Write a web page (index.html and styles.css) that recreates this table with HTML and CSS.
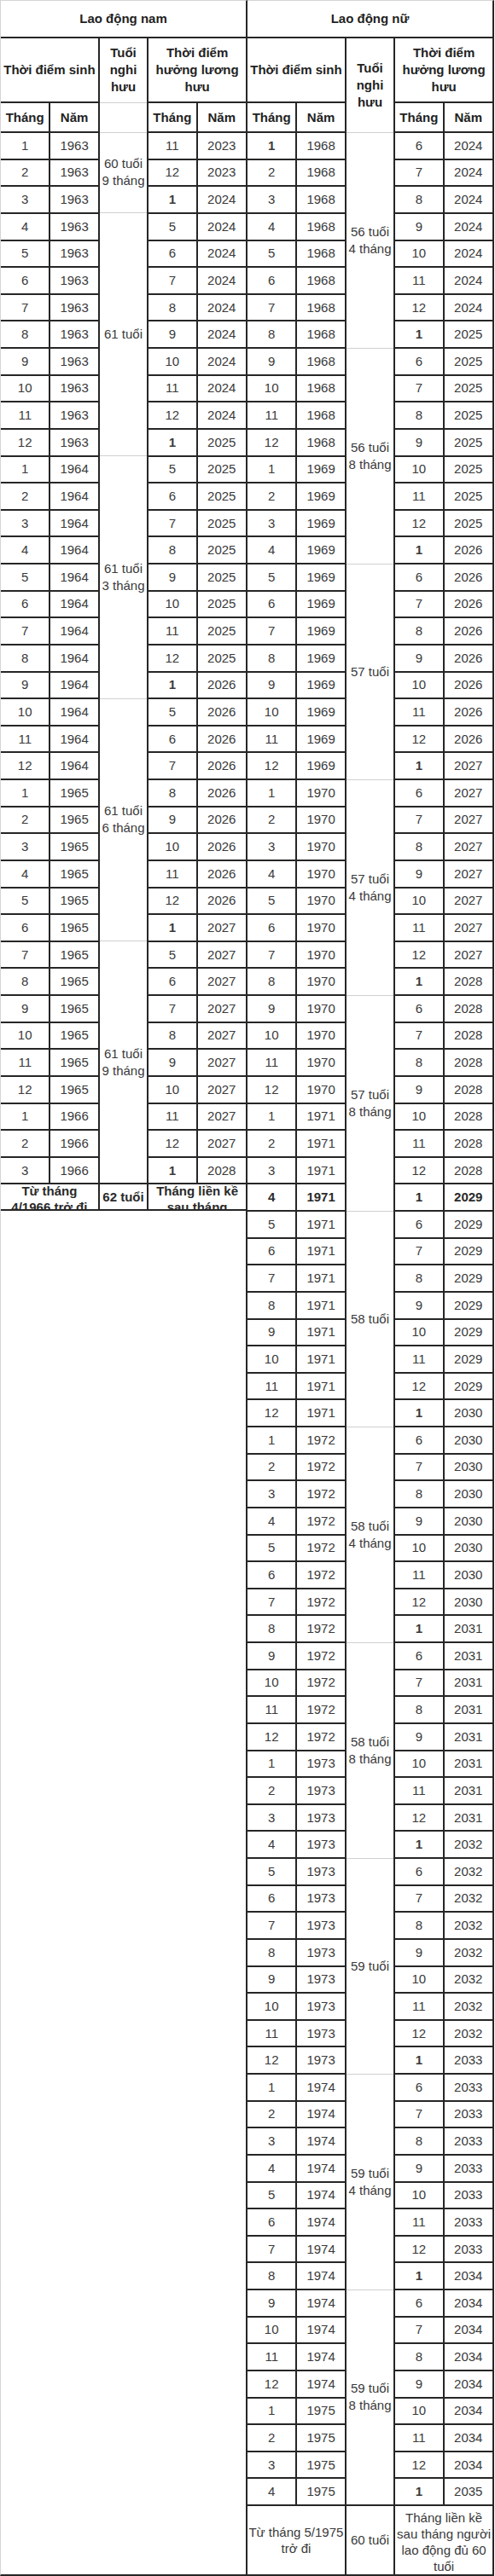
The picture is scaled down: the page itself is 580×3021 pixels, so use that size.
FILE: index.html
```html
<!DOCTYPE html>
<html lang="vi">
<head>
<meta charset="utf-8">
<title>Lộ trình tuổi nghỉ hưu</title>
<link rel="stylesheet" href="styles.css">
</head>
<body>
<div class="sheet">
  <div class="side side-male">
    <table class="grid">
      <colgroup><col><col><col><col><col></colgroup>
      <thead>
        <tr class="h1"><th colspan="5">Lao động nam</th></tr>
        <tr class="h2"><th colspan="2">Thời điểm sinh</th><th class="age">Tuổi<br>nghi<br>hưu</th><th colspan="2">Thời điểm<br>hưởng lương<br>hưu</th></tr>
        <tr class="h3"><th>Tháng</th><th>Năm</th><th class="age"></th><th>Tháng</th><th>Năm</th></tr>
      </thead>
      <tbody>
        <tr><td>1</td><td>1963</td><td class="age" rowspan="3">60 tuổi<br>9 tháng</td><td>11</td><td>2023</td></tr>
        <tr><td>2</td><td>1963</td><td>12</td><td>2023</td></tr>
        <tr><td>3</td><td>1963</td><td class="b">1</td><td>2024</td></tr>
        <tr><td>4</td><td>1963</td><td class="age" rowspan="9">61 tuổi</td><td>5</td><td>2024</td></tr>
        <tr><td>5</td><td>1963</td><td>6</td><td>2024</td></tr>
        <tr><td>6</td><td>1963</td><td>7</td><td>2024</td></tr>
        <tr><td>7</td><td>1963</td><td>8</td><td>2024</td></tr>
        <tr><td>8</td><td>1963</td><td>9</td><td>2024</td></tr>
        <tr><td>9</td><td>1963</td><td>10</td><td>2024</td></tr>
        <tr><td>10</td><td>1963</td><td>11</td><td>2024</td></tr>
        <tr><td>11</td><td>1963</td><td>12</td><td>2024</td></tr>
        <tr><td>12</td><td>1963</td><td class="b">1</td><td>2025</td></tr>
        <tr><td>1</td><td>1964</td><td class="age" rowspan="9">61 tuổi<br>3 tháng</td><td>5</td><td>2025</td></tr>
        <tr><td>2</td><td>1964</td><td>6</td><td>2025</td></tr>
        <tr><td>3</td><td>1964</td><td>7</td><td>2025</td></tr>
        <tr><td>4</td><td>1964</td><td>8</td><td>2025</td></tr>
        <tr><td>5</td><td>1964</td><td>9</td><td>2025</td></tr>
        <tr><td>6</td><td>1964</td><td>10</td><td>2025</td></tr>
        <tr><td>7</td><td>1964</td><td>11</td><td>2025</td></tr>
        <tr><td>8</td><td>1964</td><td>12</td><td>2025</td></tr>
        <tr><td>9</td><td>1964</td><td class="b">1</td><td>2026</td></tr>
        <tr><td>10</td><td>1964</td><td class="age" rowspan="9">61 tuổi<br>6 tháng</td><td>5</td><td>2026</td></tr>
        <tr><td>11</td><td>1964</td><td>6</td><td>2026</td></tr>
        <tr><td>12</td><td>1964</td><td>7</td><td>2026</td></tr>
        <tr><td>1</td><td>1965</td><td>8</td><td>2026</td></tr>
        <tr><td>2</td><td>1965</td><td>9</td><td>2026</td></tr>
        <tr><td>3</td><td>1965</td><td>10</td><td>2026</td></tr>
        <tr><td>4</td><td>1965</td><td>11</td><td>2026</td></tr>
        <tr><td>5</td><td>1965</td><td>12</td><td>2026</td></tr>
        <tr><td>6</td><td>1965</td><td class="b">1</td><td>2027</td></tr>
        <tr><td>7</td><td>1965</td><td class="age" rowspan="9">61 tuổi<br>9 tháng</td><td>5</td><td>2027</td></tr>
        <tr><td>8</td><td>1965</td><td>6</td><td>2027</td></tr>
        <tr><td>9</td><td>1965</td><td>7</td><td>2027</td></tr>
        <tr><td>10</td><td>1965</td><td>8</td><td>2027</td></tr>
        <tr><td>11</td><td>1965</td><td>9</td><td>2027</td></tr>
        <tr><td>12</td><td>1965</td><td>10</td><td>2027</td></tr>
        <tr><td>1</td><td>1966</td><td>11</td><td>2027</td></tr>
        <tr><td>2</td><td>1966</td><td>12</td><td>2027</td></tr>
        <tr><td>3</td><td>1966</td><td class="b">1</td><td>2028</td></tr>
        <tr class="last-male">
          <td colspan="2" class="clipcell"><div class="clip"><div class="clip-in">Từ tháng<br>4/1966 trở đi</div></div></td>
          <td class="mid">62 tuổi</td>
          <td colspan="2" class="clipcell"><div class="clip"><div class="clip-in">Tháng liền kề<br>sau tháng<br>người lao động<br>đủ 62 tuổi</div></div></td>
        </tr>
      </tbody>
    </table>
  </div>
  <div class="side side-female">
    <table class="grid">
      <colgroup><col><col><col><col><col></colgroup>
      <thead>
        <tr class="h1"><th colspan="5">Lao động nữ</th></tr>
        <tr class="h2"><th colspan="2">Thời điểm sinh</th><th class="age" rowspan="2">Tuổi<br>nghi<br>hưu</th><th colspan="2">Thời điểm<br>hưởng lương<br>hưu</th></tr>
        <tr class="h3"><th>Tháng</th><th>Năm</th><th>Tháng</th><th>Năm</th></tr>
      </thead>
      <tbody>
        <tr><td class="b">1</td><td>1968</td><td class="age" rowspan="8">56 tuổi<br>4 tháng</td><td>6</td><td>2024</td></tr>
        <tr><td>2</td><td>1968</td><td>7</td><td>2024</td></tr>
        <tr><td>3</td><td>1968</td><td>8</td><td>2024</td></tr>
        <tr><td>4</td><td>1968</td><td>9</td><td>2024</td></tr>
        <tr><td>5</td><td>1968</td><td>10</td><td>2024</td></tr>
        <tr><td>6</td><td>1968</td><td>11</td><td>2024</td></tr>
        <tr><td>7</td><td>1968</td><td>12</td><td>2024</td></tr>
        <tr><td>8</td><td>1968</td><td class="b">1</td><td>2025</td></tr>
        <tr><td>9</td><td>1968</td><td class="age" rowspan="8">56 tuổi<br>8 tháng</td><td>6</td><td>2025</td></tr>
        <tr><td>10</td><td>1968</td><td>7</td><td>2025</td></tr>
        <tr><td>11</td><td>1968</td><td>8</td><td>2025</td></tr>
        <tr><td>12</td><td>1968</td><td>9</td><td>2025</td></tr>
        <tr><td>1</td><td>1969</td><td>10</td><td>2025</td></tr>
        <tr><td>2</td><td>1969</td><td>11</td><td>2025</td></tr>
        <tr><td>3</td><td>1969</td><td>12</td><td>2025</td></tr>
        <tr><td>4</td><td>1969</td><td class="b">1</td><td>2026</td></tr>
        <tr><td>5</td><td>1969</td><td class="age" rowspan="8">57 tuổi</td><td>6</td><td>2026</td></tr>
        <tr><td>6</td><td>1969</td><td>7</td><td>2026</td></tr>
        <tr><td>7</td><td>1969</td><td>8</td><td>2026</td></tr>
        <tr><td>8</td><td>1969</td><td>9</td><td>2026</td></tr>
        <tr><td>9</td><td>1969</td><td>10</td><td>2026</td></tr>
        <tr><td>10</td><td>1969</td><td>11</td><td>2026</td></tr>
        <tr><td>11</td><td>1969</td><td>12</td><td>2026</td></tr>
        <tr><td>12</td><td>1969</td><td class="b">1</td><td>2027</td></tr>
        <tr><td>1</td><td>1970</td><td class="age" rowspan="8">57 tuổi<br>4 tháng</td><td>6</td><td>2027</td></tr>
        <tr><td>2</td><td>1970</td><td>7</td><td>2027</td></tr>
        <tr><td>3</td><td>1970</td><td>8</td><td>2027</td></tr>
        <tr><td>4</td><td>1970</td><td>9</td><td>2027</td></tr>
        <tr><td>5</td><td>1970</td><td>10</td><td>2027</td></tr>
        <tr><td>6</td><td>1970</td><td>11</td><td>2027</td></tr>
        <tr><td>7</td><td>1970</td><td>12</td><td>2027</td></tr>
        <tr><td>8</td><td>1970</td><td class="b">1</td><td>2028</td></tr>
        <tr><td>9</td><td>1970</td><td class="age" rowspan="8">57 tuổi<br>8 tháng</td><td>6</td><td>2028</td></tr>
        <tr><td>10</td><td>1970</td><td>7</td><td>2028</td></tr>
        <tr><td>11</td><td>1970</td><td>8</td><td>2028</td></tr>
        <tr><td>12</td><td>1970</td><td>9</td><td>2028</td></tr>
        <tr><td>1</td><td>1971</td><td>10</td><td>2028</td></tr>
        <tr><td>2</td><td>1971</td><td>11</td><td>2028</td></tr>
        <tr><td>3</td><td>1971</td><td>12</td><td>2028</td></tr>
        <tr class="bold-row"><td>4</td><td>1971</td><td>1</td><td>2029</td></tr>
        <tr><td>5</td><td>1971</td><td class="age" rowspan="8">58 tuổi</td><td>6</td><td>2029</td></tr>
        <tr><td>6</td><td>1971</td><td>7</td><td>2029</td></tr>
        <tr><td>7</td><td>1971</td><td>8</td><td>2029</td></tr>
        <tr><td>8</td><td>1971</td><td>9</td><td>2029</td></tr>
        <tr><td>9</td><td>1971</td><td>10</td><td>2029</td></tr>
        <tr><td>10</td><td>1971</td><td>11</td><td>2029</td></tr>
        <tr><td>11</td><td>1971</td><td>12</td><td>2029</td></tr>
        <tr><td>12</td><td>1971</td><td class="b">1</td><td>2030</td></tr>
        <tr><td>1</td><td>1972</td><td class="age" rowspan="8">58 tuổi<br>4 tháng</td><td>6</td><td>2030</td></tr>
        <tr><td>2</td><td>1972</td><td>7</td><td>2030</td></tr>
        <tr><td>3</td><td>1972</td><td>8</td><td>2030</td></tr>
        <tr><td>4</td><td>1972</td><td>9</td><td>2030</td></tr>
        <tr><td>5</td><td>1972</td><td>10</td><td>2030</td></tr>
        <tr><td>6</td><td>1972</td><td>11</td><td>2030</td></tr>
        <tr><td>7</td><td>1972</td><td>12</td><td>2030</td></tr>
        <tr><td>8</td><td>1972</td><td class="b">1</td><td>2031</td></tr>
        <tr><td>9</td><td>1972</td><td class="age" rowspan="8">58 tuổi<br>8 tháng</td><td>6</td><td>2031</td></tr>
        <tr><td>10</td><td>1972</td><td>7</td><td>2031</td></tr>
        <tr><td>11</td><td>1972</td><td>8</td><td>2031</td></tr>
        <tr><td>12</td><td>1972</td><td>9</td><td>2031</td></tr>
        <tr><td>1</td><td>1973</td><td>10</td><td>2031</td></tr>
        <tr><td>2</td><td>1973</td><td>11</td><td>2031</td></tr>
        <tr><td>3</td><td>1973</td><td>12</td><td>2031</td></tr>
        <tr><td>4</td><td>1973</td><td class="b">1</td><td>2032</td></tr>
        <tr><td>5</td><td>1973</td><td class="age" rowspan="8">59 tuổi</td><td>6</td><td>2032</td></tr>
        <tr><td>6</td><td>1973</td><td>7</td><td>2032</td></tr>
        <tr><td>7</td><td>1973</td><td>8</td><td>2032</td></tr>
        <tr><td>8</td><td>1973</td><td>9</td><td>2032</td></tr>
        <tr><td>9</td><td>1973</td><td>10</td><td>2032</td></tr>
        <tr><td>10</td><td>1973</td><td>11</td><td>2032</td></tr>
        <tr><td>11</td><td>1973</td><td>12</td><td>2032</td></tr>
        <tr><td>12</td><td>1973</td><td class="b">1</td><td>2033</td></tr>
        <tr><td>1</td><td>1974</td><td class="age" rowspan="8">59 tuổi<br>4 tháng</td><td>6</td><td>2033</td></tr>
        <tr><td>2</td><td>1974</td><td>7</td><td>2033</td></tr>
        <tr><td>3</td><td>1974</td><td>8</td><td>2033</td></tr>
        <tr><td>4</td><td>1974</td><td>9</td><td>2033</td></tr>
        <tr><td>5</td><td>1974</td><td>10</td><td>2033</td></tr>
        <tr><td>6</td><td>1974</td><td>11</td><td>2033</td></tr>
        <tr><td>7</td><td>1974</td><td>12</td><td>2033</td></tr>
        <tr><td>8</td><td>1974</td><td class="b">1</td><td>2034</td></tr>
        <tr><td>9</td><td>1974</td><td class="age" rowspan="8">59 tuổi<br>8 tháng</td><td>6</td><td>2034</td></tr>
        <tr><td>10</td><td>1974</td><td>7</td><td>2034</td></tr>
        <tr><td>11</td><td>1974</td><td>8</td><td>2034</td></tr>
        <tr><td>12</td><td>1974</td><td>9</td><td>2034</td></tr>
        <tr><td>1</td><td>1975</td><td>10</td><td>2034</td></tr>
        <tr><td>2</td><td>1975</td><td>11</td><td>2034</td></tr>
        <tr><td>3</td><td>1975</td><td>12</td><td>2034</td></tr>
        <tr><td>4</td><td>1975</td><td class="b">1</td><td>2035</td></tr>
        <tr class="last-female">
          <td colspan="2">Từ tháng 5/1975<br>trở đi</td>
          <td>60 tuổi</td>
          <td colspan="2" class="long">Tháng liền kề<br>sau tháng người<br>lao động đủ 60<br>tuổi</td>
        </tr>
      </tbody>
    </table>
  </div>
</div>
</body>
</html>
```

FILE: styles.css
```css
html, body {
  margin: 0;
  padding: 0;
  background: #ffffff;
}

body {
  font-family: "Liberation Sans", Arial, sans-serif;
  font-size: 15px;
  color: #3a3a3a;
}

.sheet {
  display: flex;
  align-items: flex-start;
  width: 580px;
}

.side {
  box-sizing: border-box;
  border-top: 1px solid #d4d4d4;
  border-right: 2px solid #262626;
}

.side-male {
  width: 290px;
  height: 3021px;
  border-left: 1px solid #d4d4d4;
  border-bottom: 2px solid #262626;
}

.side-female {
  width: 289px;
  border-bottom: 2px solid #262626;
}

.grid {
  width: 100%;
  border-collapse: collapse;
  table-layout: fixed;
}

.grid th,
.grid td {
  border: 2px solid #262626;
  padding: 0 1px;
  text-align: center;
  vertical-align: middle;
  line-height: 20px;
  white-space: nowrap;
}

.grid th {
  font-weight: bold;
  color: #222222;
}

.grid tr > :first-child {
  border-left: none;
}

.grid tr > :last-child {
  border-right: none;
}

.grid .h1 th {
  border-top: none;
}

.grid .h1 { height: 43px; }
.grid .h2 { height: 76px; }
.grid .h3 { height: 35px; }
.grid tbody tr { height: 31.64px; }

.grid .age {
  border-top: 1px solid #d0d0d0;
  border-bottom: 1px solid #d0d0d0;
}

.grid .b {
  font-weight: bold;
}

.grid .bold-row td {
  font-weight: bold;
  color: #2a2a2a;
}

/* last row of the male table: clipped, bold */
.grid .last-male { height: 31px; }

.grid .last-male td {
  font-weight: bold;
  color: #2a2a2a;
  line-height: 19px;
}

.grid .last-male .clipcell {
  vertical-align: top;
}

.clip {
  height: 29px;
  overflow: hidden;
}

.clip-in {
  margin-top: -2px;
}

/* last row of the female table */
.grid .last-female { height: 80px; }

.grid .last-female td {
  line-height: 19.5px;
}

.grid .last-female .long {
  line-height: 19px;
  padding-top: 4px;
}
```
